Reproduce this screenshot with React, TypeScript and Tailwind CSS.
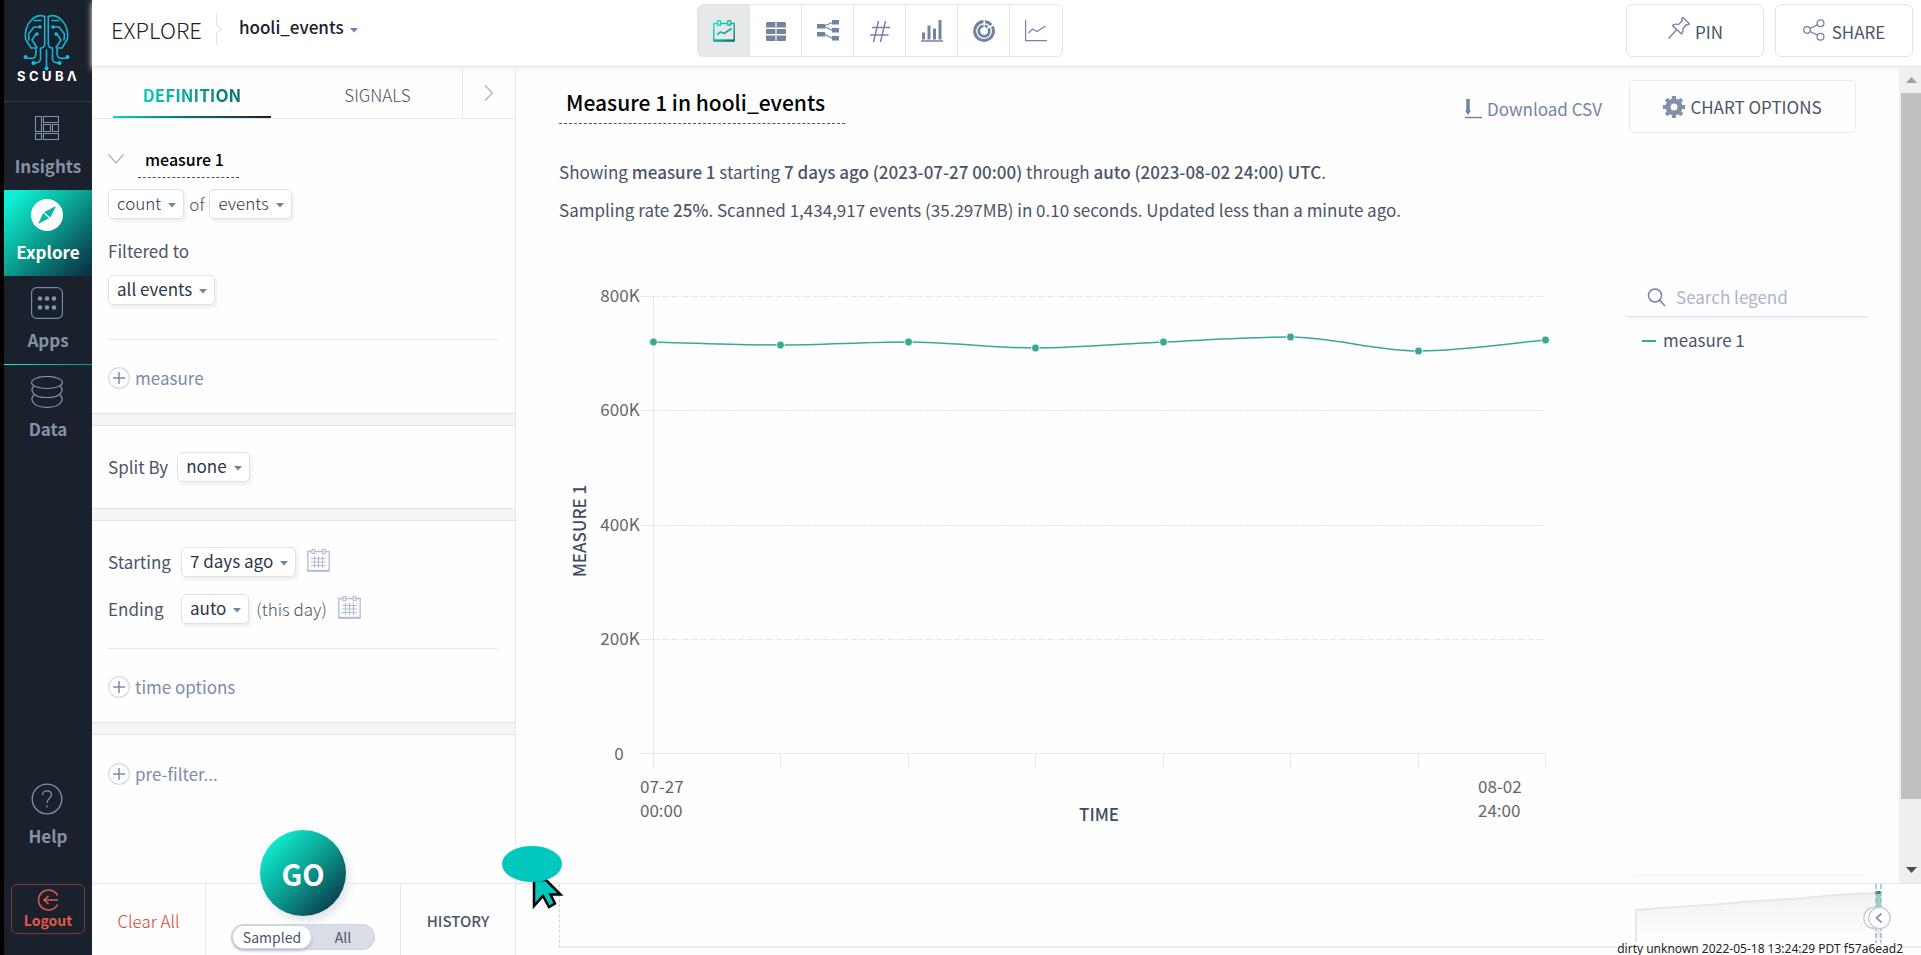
import type { ReactNode } from "react";

const POINTS = [
  [94, 59],
  [221, 62],
  [349, 59],
  [476, 65],
  [604, 59],
  [731, 54],
  [859, 68],
  [986, 57],
];

const GRID = [
  { y: 13, label: "800K" },
  { y: 127, label: "600K" },
  { y: 242, label: "400K" },
  { y: 356, label: "200K" },
];

function smoothPath(points: number[][]) {
  let d = `M${points[0][0]} ${points[0][1]}`;
  for (let i = 0; i < points.length - 1; i++) {
    const [x0, y0] = points[i];
    const [x1, y1] = points[i + 1];
    const slope = (k: number) => {
      if (k <= 0 || k >= points.length - 1) return null;
      const a = points[k][1] - points[k - 1][1];
      const b = points[k + 1][1] - points[k][1];
      return a * b <= 0 ? 0 : (a + b) / 2;
    };
    const s0 = slope(i) ?? (y1 - y0) * 1.2;
    const s1 = slope(i + 1) ?? (y1 - y0) * 1.2;
    const w = (x1 - x0) / 3;
    d += `C${x0 + w} ${y0 + s0 / 3} ${x1 - w} ${y1 - s1 / 3} ${x1} ${y1}`;
  }
  return d;
}

function Caret() {
  return (
    <svg className="pointer-events-none absolute right-2 top-1/2 -mt-px" width="8" height="5" viewBox="0 0 8 5" aria-hidden="true">
      <path d="M0 0h8L4 4.5z" fill="#7383a4" />
    </svg>
  );
}

function Picker({ label, value }: { label: string; value: string }) {
  return (
    <span className="relative inline-flex">
      <select
        aria-label={label}
        defaultValue={value}
        className="field-sizing-content h-[30px] appearance-none rounded-[5px] border border-[#dbe2ea] bg-white pb-0.5 pl-2 pr-[22px] text-[17px] leading-[26px] text-[#2d3748] shadow-[2px_3px_3px_#eef0f3]"
      >
        <option>{value}</option>
      </select>
      <Caret />
    </span>
  );
}

function AddButton({ children }: { children: ReactNode }) {
  return (
    <button type="button" className="flex items-center gap-[5px] leading-6 text-[#7b8ba8]">
      <svg width="22" height="22" viewBox="0 0 22 22" fill="none" aria-hidden="true">
        <circle cx="11" cy="11" r="10.3" stroke="#d5dce5" strokeWidth="1.2" />
        <path d="M11 5v12M5 11h12" stroke="#7b8ba8" strokeWidth="1.5" />
      </svg>
      {children}
    </button>
  );
}

function CalendarButton({ label }: { label: string }) {
  return (
    <button type="button" aria-label={label} className="mb-1">
      <svg width="23" height="23" viewBox="0 0 23 23" fill="none" stroke="#b3bed0" aria-hidden="true">
        <path d="M5 2.5H.8v19.3h21.4V2.5H18M8 2.5h7" strokeWidth="1.3" />
        <path d="M.5 21.8h22" strokeWidth="2" />
        <rect x="5" y=".6" width="2.6" height="4" strokeWidth="1.1" />
        <rect x="15.4" y=".6" width="2.6" height="4" strokeWidth="1.1" />
        <path d="M7.5 7v12M11.5 7v12M15.5 7v12M4 9.5h15M4 13h15M4 16.5h15" strokeWidth="1.2" />
      </svg>
    </button>
  );
}

function Band() {
  return <div className="h-[13px] shrink-0 border-y border-[#dfe3e6] bg-[#f5f5f5]" />;
}

function Logo() {
  return (
    <svg width="62" height="72" viewBox="0 0 62 72" fill="none" role="img" aria-label="Scuba">
      <g stroke="#12b5d6" strokeWidth="1.6" strokeLinecap="round" strokeLinejoin="round">
        <path d="M28.7 2.5C24 .5 18 2 14.5 7C9 13 9 20 9.5 25L15 34H20V38C20 43 19 46 9 43.5" />
        <path d="M28.7 2.5V30Q28.7 34 24.5 34V45Q24.5 49 18 49" />
        <path d="M25 6.5H18M24 13H18L12.5 20L13 26M20 20L16 26L21 33.5" />
        <path d="M32.3 2.5C37 .5 43 2 46.5 7C52 13 52 20 51.5 25L46 34H41V38C41 43 42 46 52 43.5" />
        <path d="M32.3 2.5V30Q32.3 34 36.5 34V45Q36.5 49 43 49" />
        <path d="M36 6.5H43M37 13H43L48.5 20L48 26M41 20L45 26L40 33.5M30.5 36V53" />
      </g>
      <g fill="#0cc3ea">
        <circle cx="24" cy="13" r="1.7" />
        <circle cx="37" cy="13" r="1.7" />
        <circle cx="21" cy="20" r="1.7" />
        <circle cx="40" cy="20" r="1.7" />
        <circle cx="9.5" cy="43" r="2" />
        <circle cx="51.5" cy="43" r="2" />
        <circle cx="17.5" cy="49" r="2" />
        <circle cx="43.5" cy="49" r="2" />
        <circle cx="30.5" cy="54.5" r="2" />
      </g>
      <text x="1 13 26 39 51" y="67" fill="#fff" className="font-['Inter'] text-[13px] leading-4 font-bold">
        SCUBΛ
      </text>
    </svg>
  );
}

function NavItem({ label, active = false, children }: { label: string; active?: boolean; children: ReactNode }) {
  return (
    <a
      href="#"
      aria-current={active ? "page" : undefined}
      className={
        active
          ? "flex h-[86px] flex-col items-center justify-between bg-linear-[135deg,#0feed3_10%,#0aa795_45%,#0a6b6b_70%,#0a3547_95%] pb-[10px] pt-[9px] font-bold leading-7 text-white"
          : "flex h-[88px] flex-col items-center justify-between pb-[10px] pt-[11px] font-bold leading-7 text-[#8492a6]"
      }
    >
      {children}
      <span>{label}</span>
    </a>
  );
}

function Sidebar() {
  return (
    <nav aria-label="Main" className="flex w-[92px] shrink-0 flex-col border-l-4 border-black bg-[#1a202c]">
      <a href="#" className="flex h-[102px] items-start justify-center border-b border-[#323a48] pt-[14px] pr-0.5">
        <Logo />
      </a>
      <NavItem label="Insights">
        <svg className="mr-0.5 mt-0.5" width="26" height="26" viewBox="0 0 26 26" fill="none" stroke="#8492a6" strokeWidth="1.1" aria-hidden="true">
          <path d="M1.5 1.5h6v15h-6zM9.5 1.5h15v6h-15zM9.5 9.5h7v7h-7zM18.5 9.5h6v7h-6zM1.5 18.5h6v6h-6zM9.5 18.5h15v6h-15z" />
        </svg>
      </NavItem>
      <NavItem label="Explore" active>
        <svg className="mr-0.5" width="32" height="32" viewBox="0 0 32 32" aria-hidden="true">
          <circle cx="16" cy="16" r="16" fill="#fff" />
          <path d="M25 7L19.5 18.5L7 25L12.5 13.5z" fill="#0eb5a2" />
          <path d="M12.5 13.5L19.5 19.5" stroke="#fff" strokeWidth="1.3" />
        </svg>
      </NavItem>
      <NavItem label="Apps">
        <svg className="mr-0.5" width="32" height="32" viewBox="0 0 32 32" fill="none" aria-hidden="true">
          <rect x=".6" y=".6" width="30.8" height="30.8" rx="5" stroke="#7687a3" strokeWidth="1.2" />
          <g fill="#8492b0">
            <circle cx="9" cy="11.5" r="2.3" />
            <circle cx="16" cy="11.5" r="2.3" />
            <circle cx="23" cy="11.5" r="2.3" />
            <circle cx="9" cy="20.5" r="2.3" />
            <circle cx="16" cy="20.5" r="2.3" />
            <circle cx="23" cy="20.5" r="2.3" />
          </g>
        </svg>
      </NavItem>
      <div className="h-px bg-linear-to-r from-[#0feed3] to-[#0b8f86]" />
      <NavItem label="Data">
        <svg className="mr-0.5" width="32" height="32" viewBox="0 0 32 32" fill="none" stroke="#8492a6" strokeWidth="1.2" aria-hidden="true">
          <ellipse cx="16" cy="6.5" rx="15.4" ry="6" />
          <path d="M3 10C-1 13.5 .5 21.5 16 21.5S33 13.5 29 10" />
          <path d="M3 19C-1 22.5 .5 31.4 16 31.4S33 22.5 29 19" />
        </svg>
      </NavItem>
      <a href="#" className="mt-auto flex flex-col items-center gap-[7px] font-bold leading-7 text-[#8492a6]">
        <svg className="mr-0.5" width="32" height="32" viewBox="0 0 32 32" fill="none" stroke="#8492a6" strokeWidth="1.3" aria-hidden="true">
          <circle cx="16" cy="16" r="14.8" />
          <path d="M11.5 12C11.5 6.5 20.5 6.5 20.5 12C20.5 15.5 16 15 16 20" />
          <path d="M16 22.5v2" />
        </svg>
        Help
      </a>
      <a
        href="#"
        className="mx-[7px] mb-[21px] mt-[34px] flex h-[50px] flex-col items-center justify-center rounded-md border border-[#793a38] text-[14px] font-bold leading-[18px] text-[#e05a47]"
      >
        <svg width="22" height="22" viewBox="0 0 22 22" fill="none" stroke="#e05a47" strokeWidth="1.6" aria-hidden="true">
          <path d="M20.5 6.5A10 10 0 1 0 20.5 15.5M21 11H7M11.5 7L7 11L11.5 15" />
        </svg>
        Logout
      </a>
    </nav>
  );
}

const CHART_TYPES = [
  {
    label: "Time view",
    icon: (
      <svg width="22" height="22" viewBox="0 0 22 22" fill="none" aria-hidden="true">
        <defs>
          <linearGradient id="teal" gradientUnits="userSpaceOnUse" x1="0" y1="0" x2="22" y2="22">
            <stop offset="0" stopColor="#0feed3" />
            <stop offset="0.5" stopColor="#0eb5a2" />
            <stop offset="1" stopColor="#0a6b6b" />
          </linearGradient>
        </defs>
        <g stroke="url(#teal)">
          <path d="M4.5 3.5H.8V20.5H21.2V3.5H18M7.5 3.5H14.5" strokeWidth="1.4" />
          <path d="M.5 20.7H21.5" strokeWidth="2.2" />
          <rect x="4.8" y=".7" width="2.8" height="4.5" strokeWidth="1.3" />
          <rect x="14.8" y=".7" width="2.8" height="4.5" strokeWidth="1.3" />
          <path d="M4 14.5L7.5 12L11 13.5L18.5 8.5" strokeWidth="1.6" />
        </g>
      </svg>
    ),
  },
  {
    label: "Table view",
    icon: (
      <svg width="22" height="22" viewBox="0 0 22 22" fill="#7383a4" aria-hidden="true">
        <path d="M2.5 2H10.5V7.5H1V3.5Q1 2 2.5 2zM11.5 2H19.5Q21 2 21 3.5V7.5H11.5zM1 9H10.5V14H1zM11.5 9H21V14H11.5zM1 15.5H10.5V21H2.5Q1 21 1 19.5zM11.5 15.5H21V19.5Q21 21 19.5 21H11.5z" />
      </svg>
    ),
  },
  {
    label: "Flow view",
    icon: (
      <svg width="22" height="22" viewBox="0 0 22 22" fill="#7383a4" aria-hidden="true">
        <path d="M7 6L15.5 2.5M7 6.5L15.5 10.5M7 14L15.5 18.5" stroke="#7383a4" strokeWidth="1.2" />
        <path d="M0 4h8v4.500H0zM0 12h8v4.500H0zM15 0h7v4.500h-7zM15 8h7v4.500h-7zM15 16h7v4.500h-7z" />
      </svg>
    ),
  },
  {
    label: "Number view",
    icon: (
      <svg width="22" height="22" viewBox="0 0 22 22" fill="none" stroke="#7383a4" strokeWidth="1.5" aria-hidden="true">
        <path d="M9.5 1L4.5 22M16.5 1L11.5 22M3 7.5H21M1 15H19.5" />
      </svg>
    ),
  },
  {
    label: "Bar view",
    icon: (
      <svg width="22" height="22" viewBox="0 0 22 22" fill="#7383a4" aria-hidden="true">
        <path d="M1 12.5h3v7H1zM6.5 5.5h3v14h-3zM12 8.5h3v11h-3zM17.5 0h3v19.5h-3zM0 20.3h22v1.5H0z" />
      </svg>
    ),
  },
  {
    label: "Pie view",
    icon: (
      <svg width="22" height="22" viewBox="0 0 22 22" fill="none" stroke="#7383a4" aria-hidden="true">
        <path d="M10.5 1.6A9.4 9.4 0 1 0 19.3 6.5" strokeWidth="3" />
        <path d="M12 1.6A9.4 9.4 0 0 1 18.2 5" strokeWidth="3" />
        <path d="M10.5 5.8A5.3 5.3 0 1 0 15.5 8.2" strokeWidth="2.8" />
        <path d="M11.8 5.8A5.3 5.3 0 0 1 14.5 7" strokeWidth="2.8" />
      </svg>
    ),
  },
  {
    label: "Line view",
    icon: (
      <svg width="22" height="22" viewBox="0 0 22 22" fill="none" stroke="#7383a4" strokeWidth="1.2" aria-hidden="true">
        <path d="M.6 0V20.7H22" />
        <path d="M3.5 13L7.5 9L12 11.5L20.5 6" />
      </svg>
    ),
  },
];

function Header() {
  return (
    <header className="z-10 flex h-[67px] shrink-0 items-start border-b border-[#dfe5ee] bg-white pr-2 pt-1 shadow-[0_2px_6px_#eef1f4]">
      <div className="flex w-[605px] shrink-0 items-center pl-[19px] pt-[9px]">
        <h1 className="text-[22px] leading-8 font-light text-[#1a202c]">EXPLORE</h1>
        <svg className="ml-[14px]" width="8" height="32" viewBox="0 0 8 32" fill="none" stroke="#dfe3ea" aria-hidden="true">
          <path d="M.6 0V12L5 16L.6 20V32" strokeWidth="1.2" />
        </svg>
        <span className="relative ml-[15px] inline-flex">
          <select
            aria-label="Dataset"
            defaultValue="hooli_events"
            className="field-sizing-content mb-1 appearance-none pr-[22px] font-medium leading-7 text-[#1a202c]"
          >
            <option>hooli_events</option>
          </select>
          <Caret />
        </span>
      </div>
      <div role="group" aria-label="Chart type" className="flex h-[53px] divide-x divide-[#dfe5ec] overflow-hidden rounded-md border border-[#dfe5ec]">
        {CHART_TYPES.map((type, i) => (
          <button
            key={type.label}
            type="button"
            aria-label={type.label}
            aria-pressed={i === 0}
            className={i === 0 ? "flex w-[52px] items-center justify-center bg-[#e7e8ea]" : "flex w-[52px] items-center justify-center"}
          >
            {type.icon}
          </button>
        ))}
      </div>
      <div className="ml-auto flex gap-[11px]">
        <button type="button" className="flex h-[53px] w-[138px] items-center justify-center gap-1 rounded-md border border-[#dfe5ec] pt-0.5 text-[#4a5568]">
          <svg className="mb-2" width="24" height="24" viewBox="0 0 24 24" fill="none" stroke="#7383a4" strokeWidth="1.3" strokeLinejoin="round" aria-hidden="true">
            <path d="M16 1.5L22.5 8L20.5 9L19.5 8.5L16 12.5Q16.5 16 14.5 18L5.5 9.5Q8 7.5 11.5 8.5L15.5 4.5L14.5 3zM9.5 14L1.500 22.5" />
          </svg>
          PIN
        </button>
        <button type="button" className="flex h-[53px] w-[138px] items-center justify-center gap-[7px] rounded-md border border-[#dfe5ec] pt-0.5 text-[#4a5568]">
          <svg className="mb-1" width="22" height="22" viewBox="0 0 22 22" fill="none" stroke="#7383a4" strokeWidth="1.3" aria-hidden="true">
            <circle cx="4" cy="11" r="3.3" />
            <circle cx="17.5" cy="4.2" r="3.4" />
            <circle cx="17.5" cy="17.8" r="3.4" />
            <path d="M7 9.5L14.5 5.8M7 12.5L14.5 16.2" />
          </svg>
          SHARE
        </button>
      </div>
    </header>
  );
}

function DefinitionPanel() {
  return (
    <aside className="relative flex w-[424px] shrink-0 flex-col border-r border-[#e2e8ee]">
      <div role="tablist" className="flex h-[52px] shrink-0 border-b border-[#e2e8ee]">
        <div className="flex flex-1 pl-[21px]">
          <button type="button" role="tab" aria-selected="true" className="relative w-[158px] pt-1 font-bold">
            <span className="bg-linear-[110deg,#0fd3bc,#0a6b6b] bg-clip-text text-transparent">DEFINITION</span>
            <span className="absolute inset-x-0 bottom-0 h-0.5 bg-linear-to-r from-[#0fd3bc] via-[#0a6b6b] to-[#1a202c]" />
          </button>
          <button type="button" role="tab" aria-selected="false" className="flex-1 pl-[22px] pt-1 font-light text-[#4a5568]">
            SIGNALS
          </button>
        </div>
        <button type="button" aria-label="Collapse panel" className="flex w-[53px] items-center justify-center border-l border-[#e2e8ee]">
          <svg width="10" height="16" viewBox="0 0 10 16" fill="none" stroke="#a6b2c6" strokeWidth="1.2" aria-hidden="true">
            <path d="M1 .5L8.5 8L1 15.5" />
          </svg>
        </button>
      </div>

      <section className="flex flex-col items-start px-4 pt-6">
        <div className="flex h-[35px] items-start">
          <button type="button" aria-label="Toggle measure" className="pt-[11px]">
            <svg width="16" height="10" viewBox="0 0 16 10" fill="none" stroke="#a6b2c6" strokeWidth="1.2" aria-hidden="true">
              <path d="M.5 .5L8 9L15.5 .5" />
            </svg>
          </button>
          <input
            aria-label="Measure name"
            defaultValue="measure 1"
            className="ml-[14px] h-[35px] w-[101px] border-b border-dashed border-[#4a5568] px-[7px] pb-0.5 text-[16px] font-medium text-black"
          />
        </div>
        <div className="mt-[11px] flex items-center gap-[5px] font-light text-[#4a5568]">
          <Picker label="Aggregate" value="count" />
          of
          <Picker label="Subject" value="events" />
        </div>
        <p className="mb-[10px] mt-[18px] leading-7 text-[#4a5568]">Filtered to</p>
        <Picker label="Filter" value="all events" />
      </section>
      <div className="ml-4 mr-[17px] mt-[34px] border-t border-[#e5e8ec]" />
      <div className="px-4 pb-[23px] pt-[26px]">
        <AddButton>measure</AddButton>
      </div>

      <Band />
      <section className="flex items-center gap-[9px] px-4 py-[26px] text-[#4a5568]">
        Split By
        <Picker label="Split by" value="none" />
      </section>

      <Band />
      <section className="grid gap-[17px] px-4 pt-[26px] text-[#4a5568]">
        <div className="flex items-center">
          <span className="w-[73px]">Starting</span>
          <Picker label="Starting" value="7 days ago" />
          <span className="ml-[11px] flex">
            <CalendarButton label="Pick start date" />
          </span>
        </div>
        <div className="flex items-center">
          <span className="w-[73px]">Ending</span>
          <Picker label="Ending" value="auto" />
          <span className="ml-[7px] mr-[11px] font-light">(this day)</span>
          <CalendarButton label="Pick end date" />
        </div>
      </section>
      <div className="ml-4 mr-[17px] mt-6 border-t border-[#e5e8ec]" />
      <div className="px-4 pb-[23px] pt-[26px]">
        <AddButton>time options</AddButton>
      </div>

      <Band />
      <div className="px-4 pt-[27px]">
        <AddButton>pre-filter...</AddButton>
      </div>

      <footer className="relative mt-auto flex h-[72px] shrink-0 border-t border-[#e2e8ee]">
        <button type="button" className="w-[114px] border-r border-[#e2e8ee] pt-0.5 font-light text-[#d6442f]">
          Clear All
        </button>
        <div className="flex flex-1 items-end justify-center pb-[5px]">
          <fieldset className="flex h-[26px] w-[144px] rounded-full border border-[#cfd5e0] bg-[#d9dde6] text-[14px] leading-[22px] text-[#4a5568]">
            <label className="flex-[78] rounded-full border border-[#cfd5e0] bg-white text-center shadow-[0_2px_3px_#b9c0cc]">
              <input type="radio" name="sampling" defaultChecked className="sr-only" />
              Sampled
            </label>
            <label className="flex-[62] text-center leading-6">
              <input type="radio" name="sampling" className="sr-only" />
              All
            </label>
          </fieldset>
        </div>
        <button type="button" className="w-[115px] border-l border-[#e2e8ee] pt-0.5 text-[15px] font-medium text-[#4a5568]">
          HISTORY
        </button>
        <button
          type="button"
          className="absolute -top-[54px] left-[168px] size-[86px] rounded-full bg-linear-[135deg,#0feed3_12%,#0b9d8f_50%,#0a3547_92%] text-[29px] font-bold text-white shadow-[3px_5px_8px_#dfe2e8]"
        >
          GO
        </button>
      </footer>
    </aside>
  );
}

function Chart() {
  return (
    <svg className="min-w-0 flex-1" viewBox="0 0 1043 560" role="img" aria-label="Measure 1 over time">
      <g stroke="#e2e8ee" fill="none">
        {GRID.map(({ y }) => (
          <g key={y}>
            <path d={`M81 ${y + 0.5}H94`} />
            <path d={`M94 ${y + 0.5}H987`} strokeDasharray="7 2.4" strokeWidth="1.2" />
          </g>
        ))}
        <path d="M81 470.5H987M94.5 13V484" />
        {POINTS.slice(1).map(([x]) => (
          <path key={x} d={`M${x + 0.5} 470V484`} />
        ))}
      </g>
      <g fill="#666" className="text-[17px]">
        {GRID.map(({ y, label }) => (
          <text key={y} x="61" y={y + 6} textAnchor="middle">
            {label}
          </text>
        ))}
        <text x="60" y="477" textAnchor="middle">0</text>
        <text x="81" y="510">07-27</text>
        <text x="81" y="534">00:00</text>
        <text x="919" y="510">08-02</text>
        <text x="919" y="534">24:00</text>
      </g>
      <g fill="#3f4c64" className="text-[17px] font-medium">
        <text x="540" y="538" textAnchor="middle">TIME</text>
        <text transform="translate(27 248) rotate(-90)" textAnchor="middle">MEASURE 1</text>
      </g>
      <path d={smoothPath(POINTS)} fill="none" stroke="#38a794" strokeWidth="1.5" />
      <g fill="#38a794" stroke="#fff" strokeWidth=".8">
        {POINTS.map(([x, y]) => (
          <circle key={x} cx={x + 0.5} cy={y} r="4" />
        ))}
      </g>
    </svg>
  );
}

function Legend() {
  return (
    <div className="flex w-[243px] shrink-0 flex-col">
      <label className="flex h-[34px] items-start gap-[10px] border-b border-[#dfe5ec] pl-[21px] shadow-[0_3px_4px_-2px_#e8ecf0]">
        <svg className="mt-[5px] shrink-0" width="19" height="19" viewBox="0 0 19 19" fill="none" stroke="#7383a4" strokeWidth="1.5" aria-hidden="true">
          <circle cx="8" cy="7.5" r="6.5" />
          <path d="M12.5 12L18 18" />
        </svg>
        <input aria-label="Search legend" placeholder="Search legend" className="h-7 min-w-0 flex-1 outline-none placeholder:text-[#aab6c8]" />
      </label>
      <div className="mt-[9px] flex items-center gap-[7px] pl-4 leading-7 text-[#4a5568]">
        <span className="mt-0.5 h-0.5 w-[14px] bg-[#38a794]" />
        measure 1
      </div>
      <div className="mb-[3px] ml-[7px] mt-auto h-1.5 bg-linear-to-b from-[#f5f7f8] to-white" />
    </div>
  );
}

function Scrollbar() {
  return (
    <div aria-hidden="true" className="flex w-[22px] shrink-0 flex-col items-center bg-[#eeeff1] pl-0.5">
      <svg className="my-[10px] shrink-0" width="11" height="6" viewBox="0 0 11 6">
        <path d="M0 6h11L5.5 0z" fill="#a0a0a0" />
      </svg>
      <div className="w-full grow-[707] bg-[#bfc0c0]" />
      <div className="grow-[58]" />
      <svg className="my-[10px] shrink-0" width="11" height="6" viewBox="0 0 11 6">
        <path d="M0 0h11L5.5 6z" fill="#4a4b4f" />
      </svg>
    </div>
  );
}

function Timeline() {
  return (
    <div className="relative h-[72px] shrink-0 border-t border-[#e2e5e9] pl-[43px]">
      <div className="flex h-16 justify-end border-b-2 border-l border-b-[#ececee] border-l-[#cfd2d7] pr-[52px] [border-left-style:dashed]">
        <svg className="-mr-[14px]" width="286" height="64" viewBox="0 0 286 64" fill="none" aria-hidden="true">
          <defs>
            <linearGradient id="area" x1="0" y1="0" x2="0" y2="1">
              <stop offset="0" stopColor="#f1f1f2" />
              <stop offset="1" stopColor="#fff" />
            </linearGradient>
          </defs>
          <g transform="translate(38 0)">
            <path d="M0 26L242 8V58H0z" fill="url(#area)" />
            <path d="M1 58V26L40 23L80 20.5L120 17L160 15L200 11L240 9" stroke="#e7e7e8" strokeWidth="2" />
            <path d="M241 9h5v15h-5z" fill="#9bcfc7" />
            <path d="M241 44h5v12h-5z" fill="#e2f2f0" />
            <path d="M240 8.5h6" stroke="#25908a" strokeWidth="3" />
            <path d="M241 0V62M246 0V62" stroke="#a3afc4" strokeWidth="1.4" strokeDasharray="5 2" />
          </g>
        </svg>
      </div>
      <p className="absolute bottom-0 right-[18px] bg-white/70 font-['Noto_Sans'] text-[12px] leading-3 text-[#222]">
        dirty unknown 2022-05-18 13:24:29 PDT f57a6ead2
      </p>
      <button type="button" aria-label="Previous range" className="absolute right-[29px] top-[22px] flex size-6 items-center">
        <svg className="-ml-[5px] shrink-0" width="29" height="24" viewBox="0 0 29 24" fill="none" aria-hidden="true">
          <circle cx="11.500" cy="12" r="10.700" fill="#fff" stroke="#c3cbd9" strokeWidth="1.300" />
          <circle cx="16.500" cy="12" r="10.700" fill="#fff" stroke="#c3cbd9" strokeWidth="1.300" />
          <path d="M18.500 7.500L13.500 12L18.500 16.500" stroke="#8492ae" strokeWidth="1.700" />
        </svg>
      </button>
    </div>
  );
}

function Results() {
  return (
    <main className="flex min-w-0 flex-1 flex-col">
      <div className="flex min-h-0 flex-1">
        <div className="flex min-w-0 flex-1 flex-col pl-[43px] pr-[30px] pt-[13px]">
          <div className="flex items-start pr-[13px]">
            <input
              aria-label="Chart title"
              defaultValue="Measure 1 in hooli_events"
              className="h-11 w-[286px] border-b border-dashed border-[#4a5568] px-[7px] text-[21px] font-medium text-black"
            />
            <button type="button" className="ml-auto mt-[15px] flex items-center gap-[5px] leading-7 text-[#7383a4]">
              <svg width="17" height="20" viewBox="0 0 17 20" fill="none" stroke="#7383a4" aria-hidden="true">
                <path d="M3 0V13" strokeWidth="3.5" />
                <path d="M0 11.5H6L3 16z" fill="#7383a4" stroke="none" />
                <path d="M0 18.5H17" strokeWidth="1.5" />
              </svg>
              Download CSV
            </button>
            <button type="button" className="ml-[27px] flex h-[53px] w-[227px] items-center justify-center gap-[5px] rounded border border-[#e8ecf0] text-[#4a5568]">
              <svg width="22" height="22" viewBox="0 0 22 22" aria-hidden="true">
                <circle cx="11" cy="11" r="6" fill="none" stroke="#8290a8" strokeWidth="5" />
                <path
                  d="M11 0V4M11 18V22M0 11H4M18 11H22M3.2 3.2L6 6M16 16L18.8 18.8M3.2 18.8L6 16M16 6L18.8 3.2"
                  stroke="#8290a8"
                  strokeWidth="4"
                />
              </svg>
              CHART OPTIONS
            </button>
          </div>
          <div className="mt-[20px] leading-[38px] text-[#4a5568] [&_b]:font-medium">
            <p>
              Showing <b>measure 1</b> starting <b>7 days ago (2023-07-27 00:00)</b> through <b>auto (2023-08-02 24:00) UTC</b>.
            </p>
            <p>
              Sampling rate <b>25%</b>. Scanned 1,434,917 events (35.297MB) in 0.10 seconds. Updated less than a minute ago.
            </p>
          </div>
          <div className="mt-[54px] flex min-h-0 flex-1 items-stretch gap-6">
            <div className="flex min-w-0 flex-1 items-start">
              <Chart />
            </div>
            <Legend />
          </div>
        </div>
        <Scrollbar />
      </div>
      <Timeline />
    </main>
  );
}

function Pointer() {
  return (
    <svg className="pointer-events-none absolute left-[502px] top-[846px] z-20" width="62" height="64" viewBox="0 0 62 64" aria-hidden="true">
      <path d="M32 34V60L41 50L47 61L53 57.5L48.5 48.5H58.5L44 34z" fill="#00c8be" stroke="#000" strokeWidth="2.5" />
      <ellipse cx="30" cy="18" rx="30" ry="18" fill="#00c8be" />
    </svg>
  );
}

export default function App() {
  return (
    <div className="relative flex min-h-screen bg-[#fefefe] font-['Noto_Sans_CJK_SC',sans-serif] text-[17px] leading-7">
      <Sidebar />
      <div className="flex min-w-0 flex-1 flex-col">
        <Header />
        <div className="flex min-h-0 flex-1">
          <DefinitionPanel />
          <Results />
        </div>
      </div>
      <Pointer />
    </div>
  );
}
